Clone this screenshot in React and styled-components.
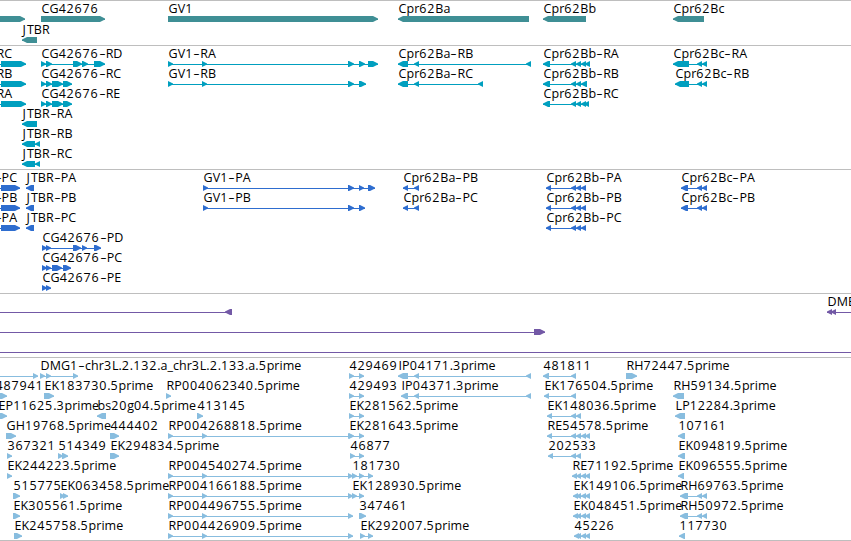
import React from "react";
import styled, { createGlobalStyle } from "styled-components";

const colors = {
  gene: "#3f8f95",
  transcript: "#009fbf",
  cds: "#2e6dcf",
  cdna: "#7359a6",
  est: "#88bddf",
};

const TIP = 5;

// one feature: label, strand, exons as [start, end], optional [start, end] of the intron line
const f = (label, strand, exons, line) => ({ label, strand, exons, line });

const bbTail = [[571, 576], [576, 581], [581, 586], [585, 590]];
const bcTail = [[697, 702], [702, 707]];
const rpExons = [[168, 173], [202, 207], [348, 353]];

const tracks = [
  {
    name: "gene",
    height: 45,
    rowHeight: 21,
    rows: [
      [
        f("", 1, [[-10, 25]]),
        f("CG42676", 1, [[41, 105]]),
        f("GV1", 1, [[168, 378]]),
        f("Cpr62Ba", -1, [[398, 529]]),
        f("Cpr62Bb", -1, [[543, 586]]),
        f("Cpr62Bc", -1, [[673, 704]]),
      ],
      [f("JTBR", -1, [[22, 37]])],
    ],
  },
  {
    name: "transcript",
    height: 124,
    rows: [
      [
        f("RC", 1, [[1, 26]], [-4, 26]),
        f("CG42676-RD", 1, [[41, 46], [46, 52], [73, 82], [82, 88], [94, 105]]),
        f("GV1-RA", 1, [[168, 173], [202, 207], [348, 354], [359, 365], [368, 378]]),
        f("Cpr62Ba-RB", -1, [[398, 408], [414, 419], [526, 531]]),
        f("Cpr62Bb-RA", -1, [[543, 550], ...bbTail]),
        f("Cpr62Bc-RA", -1, [[673, 689], ...bcTail]),
      ],
      [
        f("RB", 1, [[1, 26]], [-4, 26]),
        f("CG42676-RC", 1, [[41, 46], [46, 52], [52, 63], [63, 72]]),
        f("GV1-RB", 1, [[168, 173], [202, 207], [348, 354], [359, 366]]),
        f("Cpr62Ba-RC", -1, [[398, 408], [414, 419], [478, 483]]),
        f("Cpr62Bb-RB", -1, [[543, 550], [571, 576], [576, 581], [581, 587]]),
        f("Cpr62Bc-RB", -1, [[675, 689], ...bcTail]),
      ],
      [
        f("RA", 1, [[1, 26]], [-4, 26]),
        f("CG42676-RE", 1, [[41, 46], [46, 52], [52, 63], [63, 72]]),
        f("Cpr62Bb-RC", -1, [[543, 550], [571, 576], [576, 581], [581, 586], [584, 589]]),
      ],
      [f("JTBR-RA", -1, [[22, 37]])],
      [f("JTBR-RB", -1, [[22, 35], [35, 40]])],
      [f("JTBR-RC", -1, [[22, 35], [35, 40]])],
    ],
  },
  {
    name: "cds",
    height: 124,
    rows: [
      [
        f("-PC", 1, [[1, 20]], [-6, 20]),
        f("JTBR-PA", -1, [[26, 34]]),
        f("GV1-PA", 1, [[203, 208], [348, 354], [359, 364], [368, 375]]),
        f("Cpr62Ba-PB", -1, [[403, 408], [414, 419]]),
        f("Cpr62Bb-PA", -1, [[546, 551], [571, 576], [576, 581], [581, 586]]),
        f("Cpr62Bc-PA", -1, [[681, 688], ...bcTail]),
      ],
      [
        f("-PB", 1, [[1, 20]], [-6, 20]),
        f("JTBR-PB", -1, [[26, 34]]),
        f("GV1-PB", 1, [[203, 208], [348, 354], [359, 365]]),
        f("Cpr62Ba-PC", -1, [[403, 408], [414, 419]]),
        f("Cpr62Bb-PB", -1, [[546, 551], [571, 576], [576, 581], [581, 586]]),
        f("Cpr62Bc-PB", -1, [[681, 688], ...bcTail]),
      ],
      [
        f("-PA", 1, [[1, 20]], [-6, 20]),
        f("JTBR-PC", -1, [[26, 34]]),
        f("Cpr62Bb-PC", -1, [[546, 551], [571, 576], [576, 581], [581, 586]]),
      ],
      [f("CG42676-PD", 1, [[42, 47], [46, 51], [73, 81], [82, 87], [94, 101]])],
      [f("CG42676-PC", 1, [[42, 47], [46, 51], [52, 62], [63, 71]])],
      [f("CG42676-PE", 1, [[42, 47], [46, 51]])],
    ],
  },
  {
    name: "cdna",
    height: 64,
    rows: [
      [
        f("", -1, [[225, 232]], [-10, 232]),
        f("DME", -1, [[827, 832], [831, 836]], [827, 860]),
      ],
      [f("", 1, [[534, 545]], [-10, 545])],
      [f("", 1, [], [-10, 860])],
    ],
  },
  {
    name: "est",
    height: 183,
    rows: [
      [
        f("", 1, [[33, 38]], [-10, 38]),
        f("DMG1-chr3L.2.132.a_chr3L.2.133.a.5prime", 1, [[40, 45], [46, 51], [73, 78]]),
        f("429469", 1, [[349, 354], [359, 364]]),
        f("IP04171.3prime", -1, [[398, 408], [414, 419], [526, 531]]),
        f("481811", -1, [[543, 549], [571, 576]]),
        f("RH72447.5prime", 1, [[626, 637]]),
      ],
      [
        f("487941", 1, [[-5, 7]]),
        f("EK183730.5prime", 1, [[44, 54]]),
        f("RP004062340.5prime", 1, [[166, 171]]),
        f("429493", 1, [[349, 354], [359, 364]]),
        f("IP04371.3prime", -1, [[401, 408], [414, 419], [526, 531]]),
        f("EK176504.5prime", -1, [[544, 549], [571, 576]]),
        f("RH59134.5prime", -1, [[673, 684]]),
      ],
      [
        f("EP11625.3prime", 1, [[-2, 7]]),
        f("bs20g04.5prime", -1, [[97, 106]]),
        f("413145", 1, [[197, 203]]),
        f("EK281562.5prime", 1, [[349, 354], [359, 364]]),
        f("EK148036.5prime", -1, [[547, 552], [571, 576], [576, 581]]),
        f("LP12284.3prime", -1, [[675, 685]]),
      ],
      [
        f("GH19768.5prime", 1, [[6, 16]]),
        f("444402", 1, [[110, 119]]),
        f("RP004268818.5prime", 1, rpExons),
        f("EK281643.5prime", 1, [[349, 354], [359, 364]]),
        f("RE54578.5prime", -1, [[547, 552], ...bbTail]),
        f("107161", -1, [[678, 685]]),
      ],
      [
        f("367321", 1, [[7, 12]]),
        f("514349", 1, [[58, 63], [62, 68]]),
        f("EK294834.5prime", 1, [[110, 119]]),
        f("46877", 1, [[350, 355], [359, 364]]),
        f("202533", -1, [[548, 553], [571, 576], [576, 581]]),
        f("EK094819.5prime", -1, [[678, 685]]),
      ],
      [
        f("EK244223.5prime", 1, [[7, 12]]),
        f("RP004540274.5prime", 1, rpExons),
        f("181730", 1, [[352, 357], [359, 364], [368, 373]]),
        f("RE71192.5prime", -1, [[572, 577], ...bbTail.slice(1)]),
        f("EK096555.5prime", -1, [[678, 684]]),
      ],
      [
        f("515775", 1, [[13, 20]]),
        f("EK063458.5prime", 1, [[60, 65], [63, 68]]),
        f("RP004166188.5prime", 1, rpExons),
        f("EK128930.5prime", 1, [[352, 357], [359, 364]]),
        f("EK149106.5prime", -1, [[573, 578], ...bbTail.slice(1)]),
        f("RH69763.5prime", -1, [[680, 688], ...bcTail]),
      ],
      [
        f("EK305561.5prime", 1, [[13, 20]]),
        f("RP004496755.5prime", 1, rpExons),
        f("347461", 1, [[359, 366]]),
        f("EK048451.5prime", -1, [[573, 578], ...bbTail.slice(1)]),
        f("RH50972.5prime", -1, [[680, 688], ...bcTail]),
      ],
      [
        f("EK245758.5prime", 1, [[14, 22]]),
        f("RP004426909.5prime", 1, rpExons),
        f("EK292007.5prime", 1, [[360, 365], [368, 373]]),
        f("45226", -1, [[574, 579], ...bbTail.slice(1)]),
        f("117730", -1, [[679, 685]]),
      ],
    ],
  },
];

const exonPoints = ([start, end], strand, origin) => {
  const a = start - origin;
  const b = end - origin;
  const tip = Math.min(TIP, b - a);
  return strand > 0
    ? `${a},0 ${b - tip},0 ${b},2.6 ${b},3.4 ${b - tip},6 ${a},6`
    : `${b},0 ${a + tip},0 ${a},2.6 ${a},3.4 ${a + tip},6 ${b},6`;
};

// digits are set wider than letters, and hyphens are stretched
const renderRuns = (label) =>
  label.split(/(\d+|-|J)/).map((run, i) => {
    if (run === "-") return <Hyphen key={i}>-</Hyphen>;
    if (run === "J") return <Run key={i} $spacing={1}>J</Run>;
    if (/^\d/.test(run)) return <Run key={i} $spacing={0.85}>{run}</Run>;
    return run;
  });

function Feature({ label, strand, exons, line, color }) {
  const [start, end] = line || [exons[0][0], exons[exons.length - 1][1]];

  return (
    <FeatureBox style={{ left: start }}>
      <Label>{renderRuns(label)}</Label>
      <Glyph width={end - start} height="6" fill={color}>
        <rect x="0" y="3" width={end - start} height="1" />
        {exons.map((exon) => (
          <polygon key={exon[0]} points={exonPoints(exon, strand, start)} />
        ))}
      </Glyph>
    </FeatureBox>
  );
}

export default function App() {
  return (
    <>
      <GlobalStyle />
      <Browser>
        {tracks.map(({ name, height, rowHeight, rows }) => (
          <Track key={name} $height={height}>
            {rows.map((row, i) => (
              <Row key={i} $height={rowHeight}>
                {row.map((feature, j) => (
                  <Feature key={j} {...feature} color={colors[name]} />
                ))}
              </Row>
            ))}
          </Track>
        ))}
      </Browser>
    </>
  );
}

const GlobalStyle = createGlobalStyle`
  body {
    margin: 0;
    background: #fff;
    overflow: hidden;
  }
`;

const Browser = styled.main`
  width: 851px;
  box-sizing: border-box;
  display: flex;
  flex-direction: column;
  overflow: hidden;
  border-bottom: 1px solid #bebebe;
  font-family: "Open Sans", "Noto Sans", sans-serif;
  font-size: 12.5px;
  font-kerning: none;
  color: #000;
`;

const Track = styled.section`
  display: flex;
  flex-direction: column;
  box-sizing: border-box;
  height: ${({ $height }) => $height}px;
  border-top: 1px solid #bebebe;
`;

const Row = styled.div`
  position: relative;
  flex: none;
  height: ${({ $height }) => $height || 20}px;
`;

/* placed along the row by its genomic start */
const FeatureBox = styled.div`
  position: absolute;
  top: 0;
  display: flex;
  flex-direction: column;
`;

const Label = styled.span`
  height: 15px;
  padding-left: 0.6px;
  line-height: 16px;
  letter-spacing: 0.03px;
  white-space: pre;
`;

const Run = styled.span`
  letter-spacing: ${({ $spacing }) => $spacing}px;
`;

const Hyphen = styled.span`
  display: inline-block;
  width: 7px;
  line-height: 1;
  text-align: center;
  transform: scaleX(1.6);
`;

const Glyph = styled.svg`
  display: block;
  flex: none;
`;
